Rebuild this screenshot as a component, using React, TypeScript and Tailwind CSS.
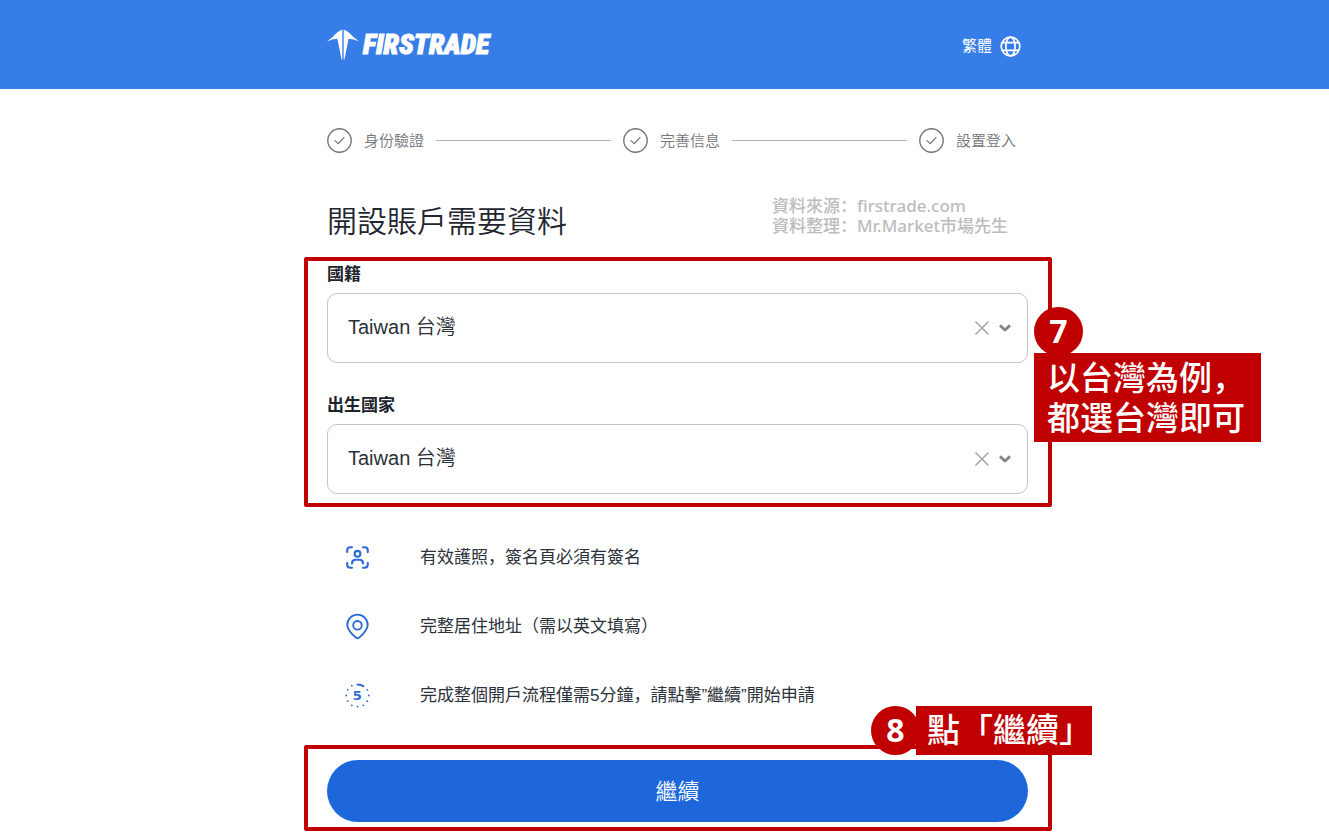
import { useState, type ReactNode } from 'react';

const COUNTRY = 'Taiwan 台灣';

function Logo() {
  return (
    <a href="#" aria-label="Firstrade" className="flex items-center gap-1 text-white">
      <svg width="32" height="34" viewBox="0 0 32 34" fill="currentColor" aria-hidden="true">
        <path d="M15.3 1.4 V31.5 L14.6 31.5 L10.4 10.8 Q5 10.8 0 13.4 Q6 9.5 9 5.6 Q11.6 2.6 15.3 1.4 Z" />
        <path d="M16.7 1.4 V31.5 L17.4 31.5 L21.6 10.8 Q27 10.8 32 13.4 Q26 9.5 23 5.6 Q20.4 2.6 16.7 1.4 Z" />
      </svg>
      <span className="font-['Liberation_Sans_Narrow','Roboto_Condensed','Open_Sans_Condensed','DejaVu_Sans_Condensed',sans-serif] text-[28px] leading-8 font-black italic [-webkit-text-stroke:1px_white]">
        FIRSTRADE
      </span>
    </a>
  );
}

function GlobeIcon() {
  return (
    <svg width="21" height="21" viewBox="0 0 21 21" fill="none" stroke="currentColor" strokeWidth="1.7" aria-hidden="true">
      <circle cx="10.5" cy="10.5" r="9.3" />
      <ellipse cx="10.5" cy="10.5" rx="4.6" ry="9.3" />
      <path d="M2.3 6.6 H18.7 M2.3 14.4 H18.7" />
    </svg>
  );
}

function Step({ label, last = false }: { label: string; last?: boolean }) {
  return (
    <li className={last ? 'flex items-center gap-3' : 'flex flex-1 items-center gap-3'}>
      <svg width="25" height="25" viewBox="0 0 25 25" fill="none" stroke="#74757d" aria-hidden="true" className="shrink-0">
        <circle cx="12.5" cy="12.5" r="11.7" strokeWidth="1.4" />
        <path d="M8 12.6 L11.2 15.6 L17 9.6" strokeWidth="1.3" strokeLinecap="round" strokeLinejoin="round" />
      </svg>
      <span className="shrink-0 text-[15px] leading-6 font-[350] text-[#74757d]">{label}</span>
      {!last && <span className="mr-3 h-px flex-1 bg-[#b4b4b8]" />}
    </li>
  );
}

function CountrySelect({ id, label }: { id: string; label: string }) {
  const [value, setValue] = useState(COUNTRY);
  return (
    <div>
      <label htmlFor={id} className="mb-1.5 block text-[17px] leading-6 font-bold text-[#1c232d]">
        {label}
      </label>
      <div className="relative">
        <select
          id={id}
          value={value}
          onChange={(e) => setValue(e.target.value)}
          className="block h-[70px] w-full appearance-none rounded-[10px] border border-[#c4c4c6] bg-white pr-20 pb-0.5 pl-5 text-xl font-[350] text-[#2b3038]"
        >
          <option value="" />
          <option value={COUNTRY}>{COUNTRY}</option>
        </select>
        <button
          type="button"
          aria-label={`清除${label}`}
          onClick={() => setValue('')}
          className="absolute top-1/2 right-[38px] -translate-y-1/2 text-[#a6a6a6]"
        >
          <svg width="16" height="16" viewBox="0 0 16 16" fill="none" stroke="currentColor" strokeWidth="1.5" aria-hidden="true">
            <path d="M1.5 1.5 L14.5 14.5 M14.5 1.5 L1.5 14.5" />
          </svg>
        </button>
        <svg
          width="14"
          height="10"
          viewBox="0 0 14 10"
          fill="none"
          stroke="#858585"
          strokeWidth="2.8"
          aria-hidden="true"
          className="pointer-events-none absolute top-1/2 right-4 -translate-y-1/2"
        >
          <path d="M2 2.4 L7 7 L12 2.4" strokeLinejoin="round" />
        </svg>
      </div>
    </div>
  );
}

function ScanIcon() {
  return (
    <svg width="25" height="25" viewBox="0 0 25 25" fill="none" stroke="#2c6bd6" strokeWidth="2.1" strokeLinecap="round" aria-hidden="true">
      <path d="M2.2 7 V5.4 Q2.2 2.2 5.4 2.2 H7 M18 2.2 H19.6 Q22.8 2.2 22.8 5.4 V7 M22.8 18 V19.6 Q22.8 22.8 19.6 22.8 H18 M7 22.8 H5.4 Q2.2 22.8 2.2 19.6 V18" />
      <circle cx="12.5" cy="8.8" r="2.9" />
      <path d="M7 18.4 Q7 14.8 10.4 14.8 H14.6 Q18 14.8 18 18.4" />
    </svg>
  );
}

function PinIcon() {
  return (
    <svg width="25" height="27" viewBox="0 0 25 27" fill="none" stroke="#2c6bd6" strokeWidth="1.9" strokeLinejoin="round" aria-hidden="true">
      <path d="M12.5 25.2 C11.4 25.2 2.3 18 2.3 11.8 A10.2 10.2 0 0 1 22.7 11.8 C22.7 18 13.6 25.2 12.5 25.2 Z" />
      <circle cx="12.5" cy="12.3" r="4.3" />
    </svg>
  );
}

function FiveMinutesIcon() {
  return (
    <svg width="25" height="25" viewBox="0 0 25 25" aria-hidden="true">
      <g fill="#2c6bd6">
        <circle cx="6.8" cy="2.7" r="0.9" />
        <circle cx="2.7" cy="6.8" r="0.9" />
        <circle cx="1.2" cy="12.5" r="0.9" />
        <circle cx="2.7" cy="18.2" r="0.9" />
        <circle cx="6.8" cy="22.3" r="0.9" />
        <circle cx="12.5" cy="23.6" r="0.9" />
        <circle cx="18.2" cy="22.3" r="0.9" />
        <circle cx="22.3" cy="18.2" r="0.9" />
        <circle cx="23.8" cy="12.5" r="0.9" />
        <circle cx="22.3" cy="6.8" r="0.9" />
      </g>
      <path d="M12.5 1.5 Q15.8 1.5 18.4 3.2" fill="none" stroke="#2c6bd6" strokeWidth="2" strokeLinecap="round" />
      <text x="12.2" y="17.2" textAnchor="middle" fill="#2c6bd6" fontSize="13" fontWeight="700" fontFamily="DejaVu Sans, sans-serif">
        5
      </text>
    </svg>
  );
}

function Requirement({ icon, children }: { icon: ReactNode; children: ReactNode }) {
  return (
    <li className="flex h-[69px] items-center gap-[50px]">
      <span className="flex w-[25px] shrink-0 justify-center">{icon}</span>
      <span className="text-[17px] leading-6 text-[#2c323b]">{children}</span>
    </li>
  );
}

function Badge({ children }: { children: ReactNode }) {
  return (
    <span className="flex size-[49px] shrink-0 items-center justify-center rounded-full bg-[#c00000] pb-0.5 font-['Open_Sans','Noto_Sans',sans-serif] text-[32px] leading-none font-bold text-white">
      {children}
    </span>
  );
}

export default function App() {
  return (
    <div className="min-h-screen bg-white pb-1.5 font-['Liberation_Sans','Noto_Sans_CJK_SC',sans-serif]" lang="zh-Hans">
      <header className="bg-[#377de8] pl-[27px]">
        <div className="mx-auto flex h-[89px] max-w-[748px] items-center justify-between pr-[31px] pl-[23px]">
          <Logo />
          <button type="button" className="mt-1 flex items-center gap-2 text-[15px] text-white">
            繁體
            <GlobeIcon />
          </button>
        </div>
      </header>

      <main className="pl-[27px]">
        <div className="mx-auto max-w-[748px]">
          <ol className="flex items-center px-[23px] pt-[39px] pr-9">
            <Step label="身份驗證" />
            <Step label="完善信息" />
            <Step label="設置登入" last />
          </ol>

          <div className="mt-[43px] flex items-start justify-between pr-11 pl-[23px]">
            <h1 className="pt-1.5 text-3xl leading-10 font-[350] text-[#1f2630]">開設賬戶需要資料</h1>
            <p className="font-['Noto_Sans','Noto_Sans_CJK_SC',sans-serif] text-[17px] leading-5 font-medium text-[#bcbcbc]">
              資料來源：firstrade.com
              <br />
              資料整理：Mr.Market市場先生
            </p>
          </div>

          <section className="relative mt-[15px] rounded-xs border-4 border-[#c00000] pt-0.5 pr-5 pb-[9px] pl-[19px]">
            <div className="flex flex-col gap-[31px]">
              <CountrySelect id="nationality" label="國籍" />
              <CountrySelect id="birth-country" label="出生國家" />
            </div>
            <aside className="absolute top-[46px] left-[calc(100%-14px)] w-max">
              <Badge>7</Badge>
              <p className="-mt-[3px] bg-[#c00000] pt-1.5 pr-4 pb-[3px] pl-[13px] text-[33px] leading-10 font-medium text-white">
                以台灣為例，
                <br />
                都選台灣即可
              </p>
            </aside>
          </section>

          <ul className="mt-4 px-[41px]">
            <Requirement icon={<ScanIcon />}>有效護照，簽名頁必須有簽名</Requirement>
            <Requirement icon={<PinIcon />}>完整居住地址（需以英文填寫）</Requirement>
            <Requirement icon={<FiveMinutesIcon />}>完成整個開戶流程僅需5分鐘，請點擊”繼續”開始申請</Requirement>
          </ul>

          <section className="relative mt-[15px] rounded-xs border-4 border-[#c00000] pt-[11px] pr-5 pb-[5px] pl-[19px]">
            <button type="button" className="block h-[62px] w-full rounded-full bg-[#1d67da] text-[22px] font-[350] text-white">
              繼續
            </button>
            <aside className="absolute -top-[43px] -right-11 flex w-max">
              <Badge>8</Badge>
              <p className="-ml-1 bg-[#c00000] pl-[11px] text-[33px] leading-[49px] font-medium text-white">點「繼續」</p>
            </aside>
          </section>
        </div>
      </main>
    </div>
  );
}
